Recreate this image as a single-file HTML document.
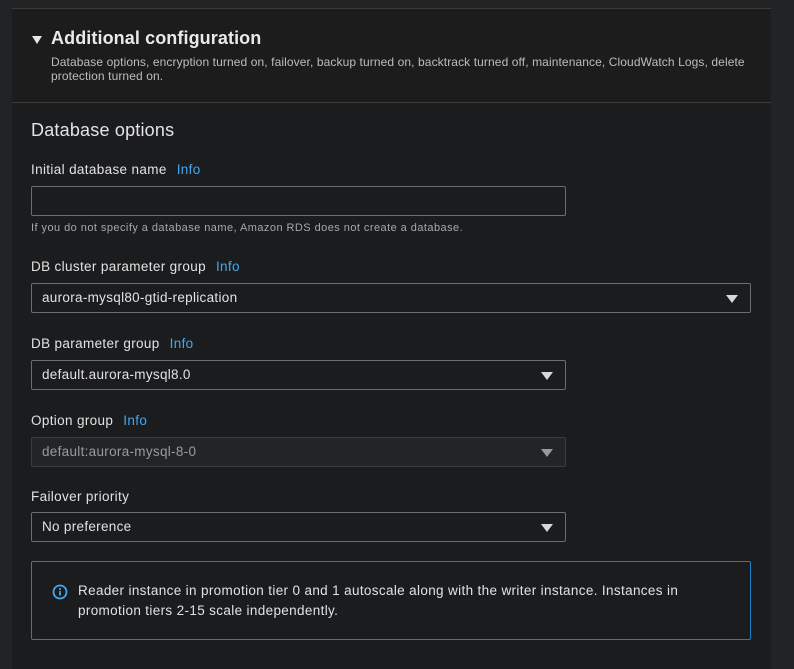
<!DOCTYPE html>
<html><head><style>
body{margin:0;width:794px;height:651px;background:#222325;font-family:"Liberation Sans",sans-serif;overflow:hidden;position:relative}
.panel{position:absolute;left:12px;top:8px;width:759px;height:660px;background:#1b1c1e;border-top:1px solid #3a3b3d}
.hdr{position:absolute;left:0;top:0;width:759px;height:93px;border-bottom:1px solid #3a3b3d;background:#1c1c1d}
.tri{position:absolute;left:20px;top:27px;width:0;height:0;border-left:5px solid transparent;border-right:5px solid transparent;border-top:8px solid #e6e6e6}
.t{position:absolute;left:39px;top:19px;font-size:18px;font-weight:bold;color:#e9e9e9;letter-spacing:0.1px}
.d{position:absolute;left:39px;top:46px;font-size:12px;letter-spacing:0.1px;line-height:14px;color:#bdbdbd;white-space:nowrap}
.h2{position:absolute;left:19px;top:111px;font-size:18px;color:#e4e4e4;letter-spacing:0.2px}
.lbl{position:absolute;left:19px;font-size:13.5px;color:#e2e2e2;letter-spacing:0.35px}
.lbl span{color:#44a7f0;margin-left:10px}
.box{position:absolute;left:19px;border:1px solid #6c6d70;border-radius:2px;background:#1b1c1e;color:#e2e2e2;font-size:13.5px;letter-spacing:0.3px;line-height:28px;padding-left:10px;box-sizing:border-box;height:30px}
.box i{position:absolute;right:12px;top:11px;border-left:6px solid transparent;border-right:6px solid transparent;border-top:8px solid #d8d8d8}
.dis{background:#232426;border-color:#3b3c3e;color:#9a9a9a}
.dis i{border-top-color:#999}
.hint{position:absolute;left:19px;top:213px;font-size:11px;letter-spacing:0.45px;color:#a8a8a8}
.info{position:absolute;left:19px;top:552px;width:720px;height:79px;border:1px solid #1f7fc6;border-radius:2px;box-sizing:border-box}
.info p{position:absolute;left:46px;top:19px;margin:0;font-size:13.5px;letter-spacing:0.35px;line-height:20px;color:#e2e2e2;white-space:nowrap}
</style></head><body>
<div class="panel">
<div class="hdr"><div class="tri"></div><div class="t">Additional configuration</div>
<div class="d">Database options, encryption turned on, failover, backup turned on, backtrack turned off, maintenance, CloudWatch Logs, delete<br>protection turned on.</div></div>
<div class="h2">Database options</div>
<div class="lbl" style="top:153px">Initial database name<span>Info</span></div>
<div class="box" style="top:177px;width:535px"></div>
<div class="hint">If you do not specify a database name, Amazon RDS does not create a database.</div>
<div class="lbl" style="top:250px">DB cluster parameter group<span>Info</span></div>
<div class="box" style="top:274px;width:720px">aurora-mysql80-gtid-replication<i></i></div>
<div class="lbl" style="top:327px">DB parameter group<span>Info</span></div>
<div class="box" style="top:351px;width:535px">default.aurora-mysql8.0<i></i></div>
<div class="lbl" style="top:404px">Option group<span>Info</span></div>
<div class="box dis" style="top:428px;width:535px">default:aurora-mysql-8-0<i></i></div>
<div class="lbl" style="top:480px">Failover priority</div>
<div class="box" style="top:503px;width:535px">No preference<i></i></div>
<div class="info">
<svg style="position:absolute;left:20px;top:22px" width="16" height="16" viewBox="0 0 16 16"><circle cx="8" cy="8" r="6.5" fill="none" stroke="#44a7f0" stroke-width="1.8"/><rect x="7.1" y="7" width="1.8" height="4.5" fill="#44a7f0"/><rect x="7.1" y="4.2" width="1.8" height="1.8" fill="#44a7f0"/></svg>
<p>Reader instance in promotion tier 0 and 1 autoscale along with the writer instance. Instances in<br>promotion tiers 2-15 scale independently.</p></div>
</div>
</body></html>
